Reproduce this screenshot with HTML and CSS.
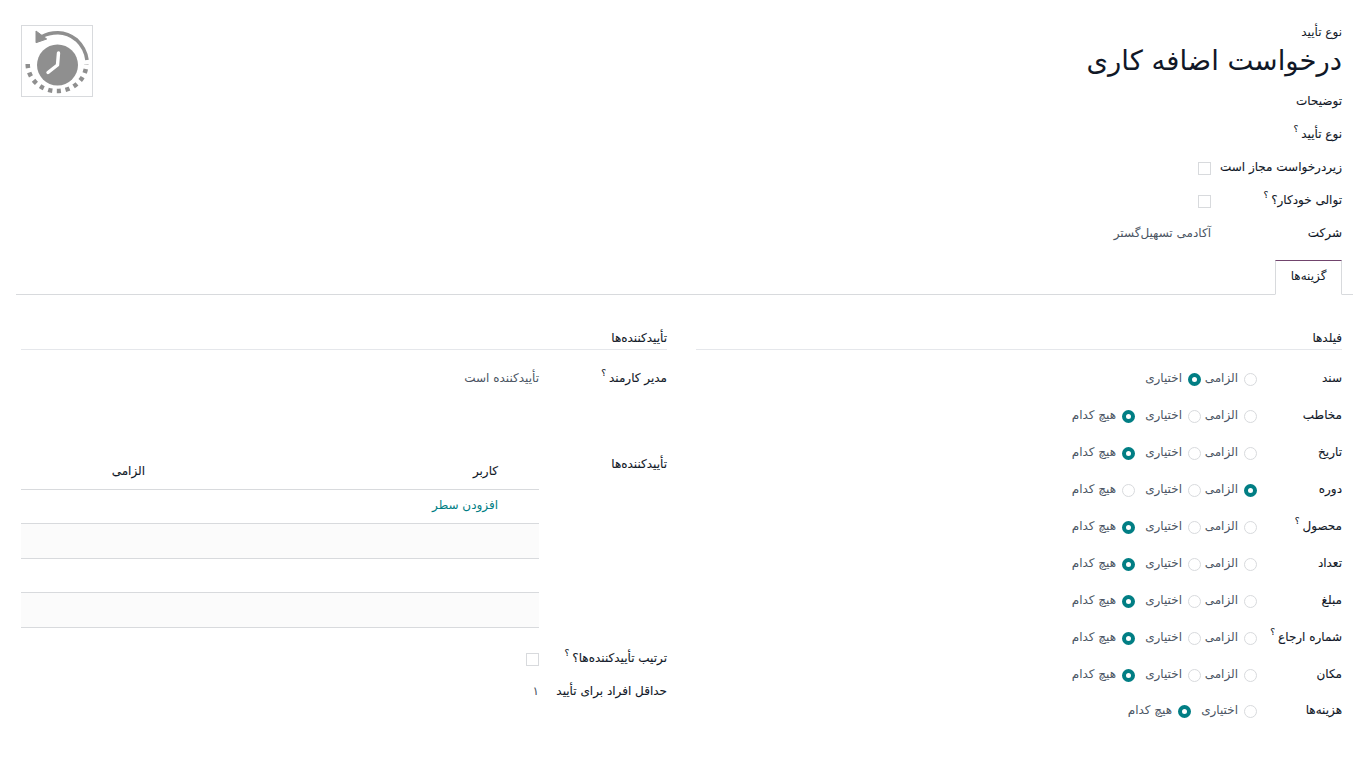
FILE: index.html
```html
<!DOCTYPE html>
<html lang="fa" dir="rtl">
<head>
<meta charset="utf-8">
<title>درخواست اضافه کاری</title>
<link rel="stylesheet" href="styles.css">
</head>
<body>
<main class="sheet">
  <header class="top">
    <div class="title-block">
      <div class="kicker">نوع تأیید</div>
      <h1 class="title">درخواست اضافه کاری</h1>
      <div class="row top-row first"><span class="label">توضیحات</span></div>
      <div class="row top-row"><span class="label">نوع تأیید<sup class="q">؟</sup></span></div>
      <div class="row top-row"><span class="label w131">زیردرخواست مجاز است</span><span class="check"></span></div>
      <div class="row top-row"><span class="label w131">توالی خودکار؟<sup class="q">؟</sup></span><span class="check"></span></div>
      <div class="row top-row"><span class="label w131">شرکت</span><span class="value">آکادمی تسهیل‌گستر</span></div>
    </div>
    <div class="avatar">
      <svg width="70" height="70" viewBox="0 0 70 70">
        <circle cx="35.5" cy="39" r="20.5" fill="#8f8f8f"/>
        <path d="M36.5 27 L35.5 39 L26 46.5" fill="none" stroke="#fff" stroke-width="3.4" stroke-linecap="round" stroke-linejoin="round"/>
        <path d="M19.7 10.7 C25 7.5 30 6.7 36 6.7 C45 6.7 50.5 10.5 54.7 14 C60.5 19.5 64 26 65 34" fill="none" stroke="#8f8f8f" stroke-width="3.6"/>
        <path d="M14 5 L14 16.7 L24.7 13 Z" fill="#8f8f8f" stroke="#8f8f8f" stroke-width="1" stroke-linejoin="round"/>
        <path d="M5.7 38 A29.2 27 0 0 0 64.3 38" fill="none" stroke="#8f8f8f" stroke-width="4.5" stroke-dasharray="4.2 4.6"/>
      </svg>
    </div>
  </header>

  <nav class="tabs"><span class="tab">گزینه‌ها</span></nav>

  <div class="columns">
    <section class="col">
      <h2 class="section">فیلدها</h2>
      <div class="row field"><span class="label w85">سند</span><div class="radios">
        <span class="opt req"><i class="radio"></i>الزامی</span><span class="opt opn"><i class="radio on"></i>اختیاری</span></div></div>
      <div class="row field"><span class="label w85">مخاطب</span><div class="radios">
        <span class="opt req"><i class="radio"></i>الزامی</span><span class="opt opn"><i class="radio"></i>اختیاری</span><span class="opt"><i class="radio on"></i>هیچ کدام</span></div></div>
      <div class="row field"><span class="label w85">تاریخ</span><div class="radios">
        <span class="opt req"><i class="radio"></i>الزامی</span><span class="opt opn"><i class="radio"></i>اختیاری</span><span class="opt"><i class="radio on"></i>هیچ کدام</span></div></div>
      <div class="row field"><span class="label w85">دوره</span><div class="radios">
        <span class="opt req"><i class="radio on"></i>الزامی</span><span class="opt opn"><i class="radio"></i>اختیاری</span><span class="opt"><i class="radio"></i>هیچ کدام</span></div></div>
      <div class="row field"><span class="label w85">محصول<sup class="q">؟</sup></span><div class="radios">
        <span class="opt req"><i class="radio"></i>الزامی</span><span class="opt opn"><i class="radio"></i>اختیاری</span><span class="opt"><i class="radio on"></i>هیچ کدام</span></div></div>
      <div class="row field"><span class="label w85">تعداد</span><div class="radios">
        <span class="opt req"><i class="radio"></i>الزامی</span><span class="opt opn"><i class="radio"></i>اختیاری</span><span class="opt"><i class="radio on"></i>هیچ کدام</span></div></div>
      <div class="row field"><span class="label w85">مبلغ</span><div class="radios">
        <span class="opt req"><i class="radio"></i>الزامی</span><span class="opt opn"><i class="radio"></i>اختیاری</span><span class="opt"><i class="radio on"></i>هیچ کدام</span></div></div>
      <div class="row field"><span class="label w85">شماره ارجاع<sup class="q">؟</sup></span><div class="radios">
        <span class="opt req"><i class="radio"></i>الزامی</span><span class="opt opn"><i class="radio"></i>اختیاری</span><span class="opt"><i class="radio on"></i>هیچ کدام</span></div></div>
      <div class="row field"><span class="label w85">مکان</span><div class="radios">
        <span class="opt req"><i class="radio"></i>الزامی</span><span class="opt opn"><i class="radio"></i>اختیاری</span><span class="opt"><i class="radio on"></i>هیچ کدام</span></div></div>
      <div class="row field"><span class="label w85">هزینه‌ها</span><div class="radios">
        <span class="opt opn"><i class="radio"></i>اختیاری</span><span class="opt"><i class="radio on"></i>هیچ کدام</span></div></div>
    </section>

    <section class="col">
      <h2 class="section">تأییدکننده‌ها</h2>
      <div class="row manager"><span class="label w128">مدیر کارمند<sup class="q">؟</sup></span><span class="value">تأییدکننده است</span></div>
      <div class="approvers">
        <span class="label w128 approvers-label">تأییدکننده‌ها</span>
        <table class="grid">
          <thead><tr><th class="c-user">کاربر</th><th class="c-req">الزامی</th></tr></thead>
          <tbody>
            <tr class="add-row"><td class="c-user"><a class="add">افزودن سطر</a></td><td></td></tr>
            <tr class="alt"><td></td><td></td></tr>
            <tr><td></td><td></td></tr>
            <tr class="alt"><td></td><td></td></tr>
          </tbody>
        </table>
      </div>
      <div class="row order"><span class="label w128">ترتیب تأییدکننده‌ها؟<sup class="q">؟</sup></span><span class="check"></span></div>
      <div class="row minimum"><span class="label w128">حداقل افراد برای تأیید</span><span class="value">۱</span></div>
    </section>
  </div>
</main>
</body>
</html>
```
FILE: styles.css
```css
* { box-sizing: border-box; }
html, body { margin: 0; padding: 0; background: #fff; }
body {
  font-family: "DejaVu Sans", sans-serif;
  font-size: 12px;
  line-height: 18px;
  color: #374151;
  overflow: hidden;
}
.sheet { width: 1337px; margin: 0 16px; height: 766px; }
.top {
  display: flex;
  justify-content: space-between;
  padding: 23px 11px 0 5px;
  height: 260px;
}
.avatar {
  width: 72px;
  height: 72px;
  margin-top: 2px;
  border: 1px solid #d8dadd;
  background: #fff;
  flex: none;
}
.avatar svg { display: block; }
.title-block { flex: 1; }
.kicker { color: #111827; height: 18px; }
.title {
  margin: 0;
  font-size: 27.5px;
  font-weight: 400;
  line-height: 38px;
  color: #111827;
}
.row { display: flex; align-items: center; }
.label { color: #111827; flex: none; display: block; -webkit-text-stroke: 0.1px #111827; }
.w131 { width: 131px; }
.w128 { width: 128px; }
.w85 { width: 85px; }
.q { font-size: 9px; line-height: 0; margin-right: 3px; color: #111827; position: relative; top: -1px; }
.value { color: #4b5563; }
.top-row { height: 33px; }
.top-row.first { margin-top: 5px; }
.check {
  display: block;
  width: 13px;
  height: 13px;
  margin-top: 3px;
  border: 1px solid #d8dadd;
  background: #fff;
  flex: none;
}
.tabs {
  height: 35px;
  border-bottom: 1px solid #d8dadd;
  padding-right: 11px;
  display: flex;
}
.tab {
  display: block;
  width: 67px;
  height: 35px;
  border: 1px solid #d8dadd;
  border-top-color: #71446d;
  border-bottom-color: #fff;
  background: #fff;
  text-align: center;
  line-height: 31px;
  color: #111827;
}
.columns {
  display: flex;
  gap: 29px;
  padding: 34px 11px 0 5px;
}
.col { width: 646px; flex: none; }
.section {
  margin: 0;
  height: 21px;
  font-size: 12px;
  line-height: 18px;
  font-weight: 400;
  color: #111827;
  -webkit-text-stroke: 0.1px #111827;
  border-bottom: 1px solid #e5e7eb;
}
.field { height: 36.9px; }
.section + .field { margin-top: 10px; }
.radios { display: flex; color: #4b5563; }
.opt { display: flex; align-items: center; gap: 6px; }
.req { width: 56px; }
.opn { width: 66px; }
.radio {
  display: block;
  width: 13px;
  height: 13px;
  border: 1px solid #d8dadd;
  border-radius: 50%;
  background: #fff;
  flex: none;
  margin-top: 3px;
}
.radio.on { border: 4px solid #017e84; }
.manager { height: 37px; margin-top: 9px; }
.approvers { display: flex; align-items: flex-start; margin-top: 58px; }
.approvers-label { margin-top: 1px; }
.grid {
  width: 518px;
  border-collapse: collapse;
  table-layout: fixed;
}
.grid th {
  height: 35px;
  padding: 0;
  font-weight: 400;
  color: #111827;
  -webkit-text-stroke: 0.1px #111827;
  text-align: right;
  border-bottom: 1px solid #d8dadd;
}
.grid td {
  height: 34.5px;
  padding: 0;
  border-bottom: 1px solid #d8dadd;
}
.grid .c-user { padding-right: 41px; width: 394px; }
.add-row td { padding-bottom: 2px; }
.alt td { background: #fbfbfb; }
.add { color: #017e84; }
.order { height: 33px; margin-top: 14px; }
.minimum { height: 33px; }
```
